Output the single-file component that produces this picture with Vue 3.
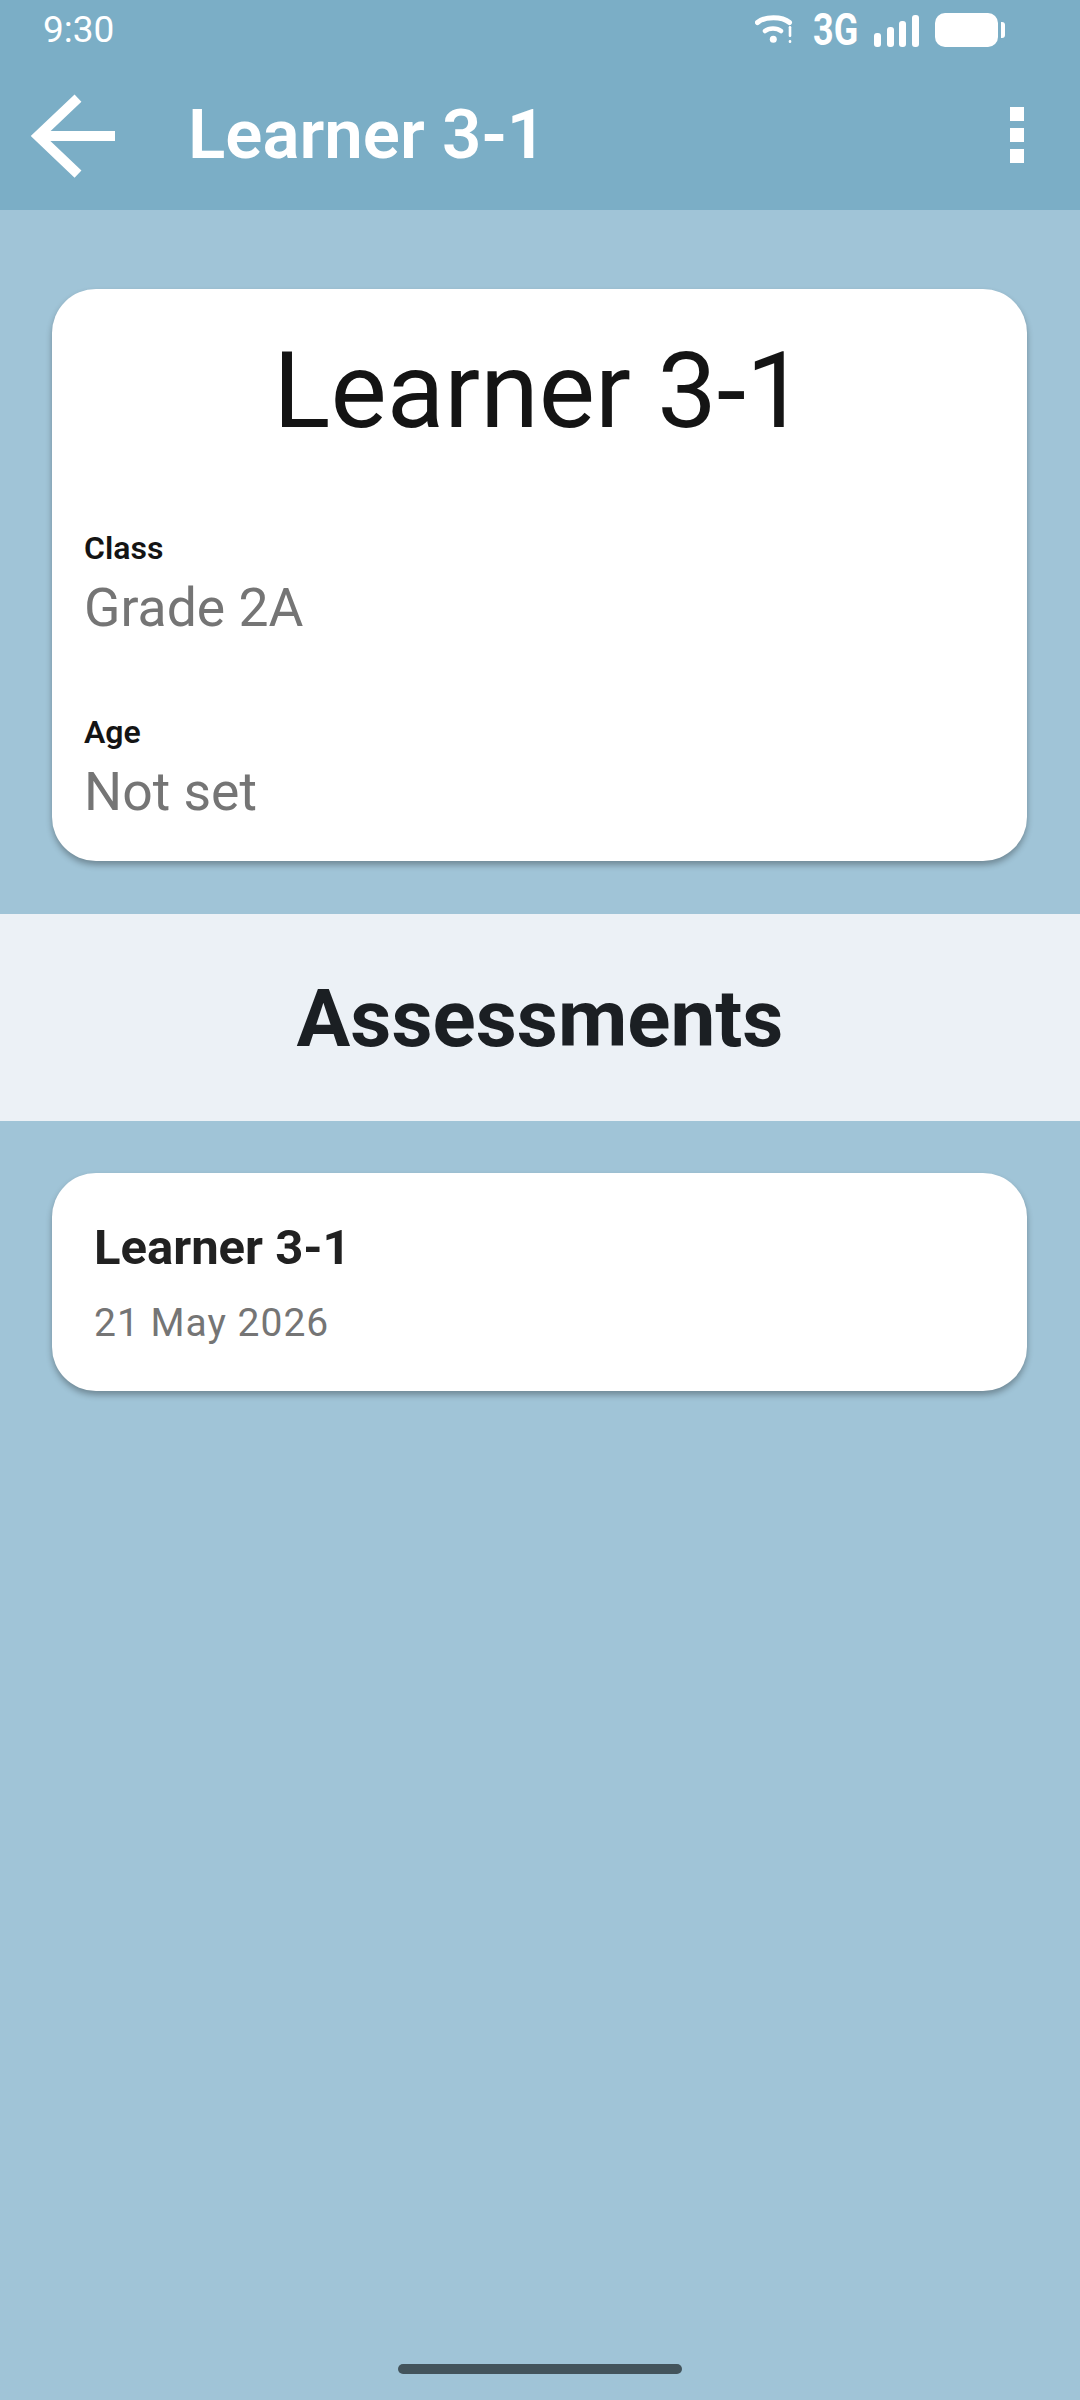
<script setup>
const info = [
  { label: "Class", value: "Grade 2A" },
  { label: "Age", value: "Not set" },
];
const learner = "Learner 3-1";
</script>

<template>
  <div class="screen">
    <header class="top">
      <div class="status">
        <span class="time">9:30</span>
        <div class="status-icons">
          <svg class="wifi" width="38" height="32" viewBox="0 0 38 32">
            <path d="M2.500 8.500C10 2 27 2 34.500 8.500" fill="none" stroke="#fff" stroke-width="5" stroke-linecap="round" />
            <path d="M10 17C14 13.500 22 13.500 26 17" fill="none" stroke="#fff" stroke-width="4.500" stroke-linecap="round" />
            <circle cx="18.300" cy="25.300" r="3.500" fill="#fff" />
            <rect x="33.700" y="12" width="2.600" height="11" rx="1.200" fill="#fff" />
            <rect x="33.700" y="26" width="2.600" height="3" rx="1.200" fill="#fff" />
          </svg>
          <span class="net">3G</span>
          <svg class="signal" width="46" height="36" viewBox="0 0 46 36">
            <rect x="0" y="21" width="7" height="14" rx="3" fill="#fff" />
            <rect x="13" y="15" width="7" height="20" rx="3" fill="#fff" />
            <rect x="25" y="9" width="7" height="26" rx="3" fill="#fff" />
            <rect x="38" y="3" width="7" height="32" rx="3" fill="#fff" />
          </svg>
          <div class="battery">
            <div class="battery-body"></div>
            <div class="battery-nub"></div>
          </div>
        </div>
      </div>
      <div class="appbar">
        <svg class="back" width="90" height="88" viewBox="0 0 90 88">
          <path d="M87 45H10M50 7L10 45L50 83" fill="none" stroke="#fff" stroke-width="10" />
        </svg>
        <h1 class="appbar-title">{{ learner }}</h1>
        <div class="dots">
          <i></i>
          <i></i>
          <i></i>
        </div>
      </div>
    </header>

    <main class="content">
      <section class="card profile">
        <h2 class="name">{{ learner }}</h2>
        <div v-for="row in info" :key="row.label" class="field">
          <div class="field-label">{{ row.label }}</div>
          <div class="field-value">{{ row.value }}</div>
        </div>
      </section>

      <div class="section-head">Assessments</div>

      <section class="card item">
        <div class="item-title">{{ learner }}</div>
        <div class="item-date">21 May 2026</div>
      </section>
    </main>

    <div class="handle-row">
      <div class="handle"></div>
    </div>
  </div>
</template>

<style>
html,
body {
  margin: 0;
  padding: 0;
}
</style>

<style scoped>
.screen {
  width: 1080px;
  height: 2400px;
  display: flex;
  flex-direction: column;
  background: #a0c4d7;
  font-family: Roboto, "Liberation Sans", sans-serif;
  overflow: hidden;
}

.top {
  height: 210px;
  background: #7baec6;
  color: #fff;
}

.status {
  height: 60px;
  display: flex;
  justify-content: space-between;
  align-items: center;
  padding: 0 75px 0 43px;
}

.time {
  font-size: 37px;
  font-weight: 400;
  line-height: 60px;
}

.status-icons {
  display: flex;
  align-items: center;
}

.wifi {
  margin-right: 20px;
}

.net {
  display: inline-block;
  width: 46px;
  margin-right: 15px;
  font-size: 45px;
  font-weight: 700;
  line-height: 44px;
  transform: scaleX(0.8);
  transform-origin: left center;
}

.signal {
  margin-right: 15px;
}

.battery {
  display: flex;
  align-items: center;
  gap: 3px;
}

.battery-body {
  width: 63px;
  height: 34px;
  border-radius: 10px;
  background: #fff;
}

.battery-nub {
  width: 4px;
  height: 16px;
  border-radius: 0 3px 3px 0;
  background: #fff;
}

.appbar {
  height: 150px;
  display: flex;
  align-items: center;
  padding: 0 56px 0 28px;
}

.back {
  flex-shrink: 0;
  margin-right: 70px;
}

.appbar-title {
  flex: 1;
  margin: 0;
  font-size: 69px;
  font-weight: 600;
  line-height: 150px;
}

.dots {
  display: flex;
  flex-direction: column;
  gap: 7px;
}

.dots i {
  display: block;
  width: 14px;
  height: 14px;
  background: #fff;
}

.content {
  flex: 1;
}

.card {
  margin: 0 53px 0 52px;
  background: #fff;
  border-radius: 44px;
  box-shadow: 0 4px 6px rgba(0, 0, 0, 0.3);
}

.profile {
  height: 572px;
  margin-top: 79px;
  box-sizing: border-box;
  padding: 0 32px;
}

.name {
  margin: 0 0 75px;
  padding-top: 39px;
  font-size: 106px;
  font-weight: 400;
  line-height: 127px;
  text-align: center;
  color: #141414;
}

.field {
  height: 184px;
}

.field-label {
  font-size: 32px;
  font-weight: 600;
  line-height: 36px;
  color: #141414;
}

.field-value {
  margin-top: 12px;
  font-size: 53.500px;
  line-height: 60px;
  color: #757575;
}

.section-head {
  height: 207px;
  margin: 53px 0 52px;
  font-size: 80px;
  font-weight: 700;
  line-height: 210px;
  text-align: center;
  background: #ecf1f6;
  color: #1b1f23;
}

.item {
  height: 218px;
  box-sizing: border-box;
  padding: 47px 42px 0;
}

.item-title {
  font-size: 49px;
  font-weight: 700;
  line-height: 56px;
  color: #212121;
}

.item-date {
  margin-top: 24px;
  font-size: 39px;
  line-height: 46px;
  letter-spacing: 1px;
  color: #757575;
}

.handle-row {
  height: 36px;
  flex-shrink: 0;
}

.handle {
  width: 284px;
  height: 10px;
  margin: 0 auto;
  border-radius: 5px;
  background: #43545c;
}
</style>
